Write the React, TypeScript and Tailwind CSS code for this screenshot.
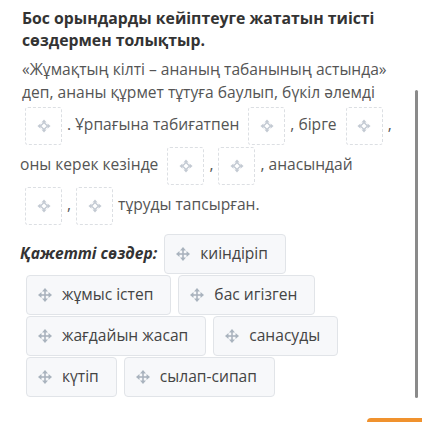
import React from 'react';

function MoveIcon({ className = '' }: { className?: string }) {
  return (
    <svg viewBox="0 0 16 16" className={className} fill="currentColor">
      <rect x="7.1" y="3" width="1.8" height="10" />
      <rect x="3" y="7.1" width="10" height="1.8" />
      <path d="M8 0 L11.4 4 H4.6 Z" />
      <path d="M8 16 L11.4 12 H4.6 Z" />
      <path d="M0 8 L4 4.6 V11.4 Z" />
      <path d="M16 8 L12 4.6 V11.4 Z" />
    </svg>
  );
}

function SlotIcon() {
  return (
    <svg viewBox="0 0 16 16" className="w-[14px] h-[14px] text-[#c3cad3]" fill="currentColor">
      <path d="M8 0.5 L11 4 H5 Z" />
      <path d="M8 15.5 L11 12 H5 Z" />
      <path d="M0.5 8 L4 5 V11 Z" />
      <path d="M15.5 8 L12 5 V11 Z" />
      <path d="M8 4 L12 8 L8 12 L4 8 Z" fill="none" stroke="currentColor" strokeWidth="1.6" />
    </svg>
  );
}

function Slot() {
  return (
    <span className="inline-flex align-middle items-center justify-center w-[37px] h-[38px] mx-[5px] border border-dashed border-[#dcdfe3] rounded-[3px]">
      <SlotIcon />
    </span>
  );
}

function Chip({ label }: { label: string }) {
  return (
    <div className="flex items-center h-[40px] pl-[11px] pr-[17px] bg-[#f7f8fa] border border-[#e1e4e8] rounded-[4px] text-[#444]">
      <MoveIcon className="w-[14px] h-[14px] text-[#a9b3be] mr-[10px]" />
      <span>{label}</span>
    </div>
  );
}

export default function App() {
  return (
    <div
      className="relative w-[422px] h-[422px] overflow-hidden bg-white pl-[20px] pt-[7px] text-[15.6px]"
      style={{ fontFamily: '"Open Sans", "Noto Sans", sans-serif' }}
    >
      {/* Task title */}
      <h1 className="font-bold text-[#333] text-[15.8px] leading-[22px] pl-[2px]">
        Бос орындарды кейіптеуге жататын тиісті сөздермен толықтыр.
      </h1>

      {/* Text with blanks */}
      <div className="mt-[7px] text-[#555] pr-[20px]">
        <p className="leading-[23px] pl-[2px]">
          «Жұмақтың кілті – ананың табанының астында» деп, ананы құрмет тұтуға баулып, бүкіл әлемді
        </p>
        <div className="h-[40px] leading-[40px] whitespace-nowrap">
          <Slot />. Ұрпағына табиғатпен <Slot />, бірге <Slot />,
        </div>
        <div className="h-[40px] leading-[40px] whitespace-nowrap">
          оны керек кезінде <Slot />,<Slot />, анасындай
        </div>
        <div className="h-[40px] leading-[40px] whitespace-nowrap">
          <Slot />,<Slot />тұруды тапсырған.
        </div>
      </div>

      {/* Word bank */}
      <div className="mt-[10px] flex flex-col gap-[1px]">
        <div className="flex items-center gap-[7px]">
          <span className="font-bold italic text-[#333]">Қажетті сөздер:</span>
          <Chip label="киіндіріп" />
        </div>
        <div className="flex gap-[7px] pl-[6px]">
          <Chip label="жұмыс істеп" />
          <Chip label="бас игізген" />
        </div>
        <div className="flex gap-[7px] pl-[6px]">
          <Chip label="жағдайын жасап" />
          <Chip label="санасуды" />
        </div>
        <div className="flex gap-[7px] pl-[6px]">
          <Chip label="күтіп" />
          <Chip label="сылап-сипап" />
        </div>
      </div>

      {/* Scrollbar thumb */}
      <div className="absolute left-[415px] top-[90px] w-[3px] h-[308px] bg-[#8a8a8a] rounded-full" />

      {/* Orange button edge */}
      <div className="absolute left-[367px] top-[418px] w-[80px] h-[30px] bg-[#f0922e] rounded-[4px]" />
    </div>
  );
}
